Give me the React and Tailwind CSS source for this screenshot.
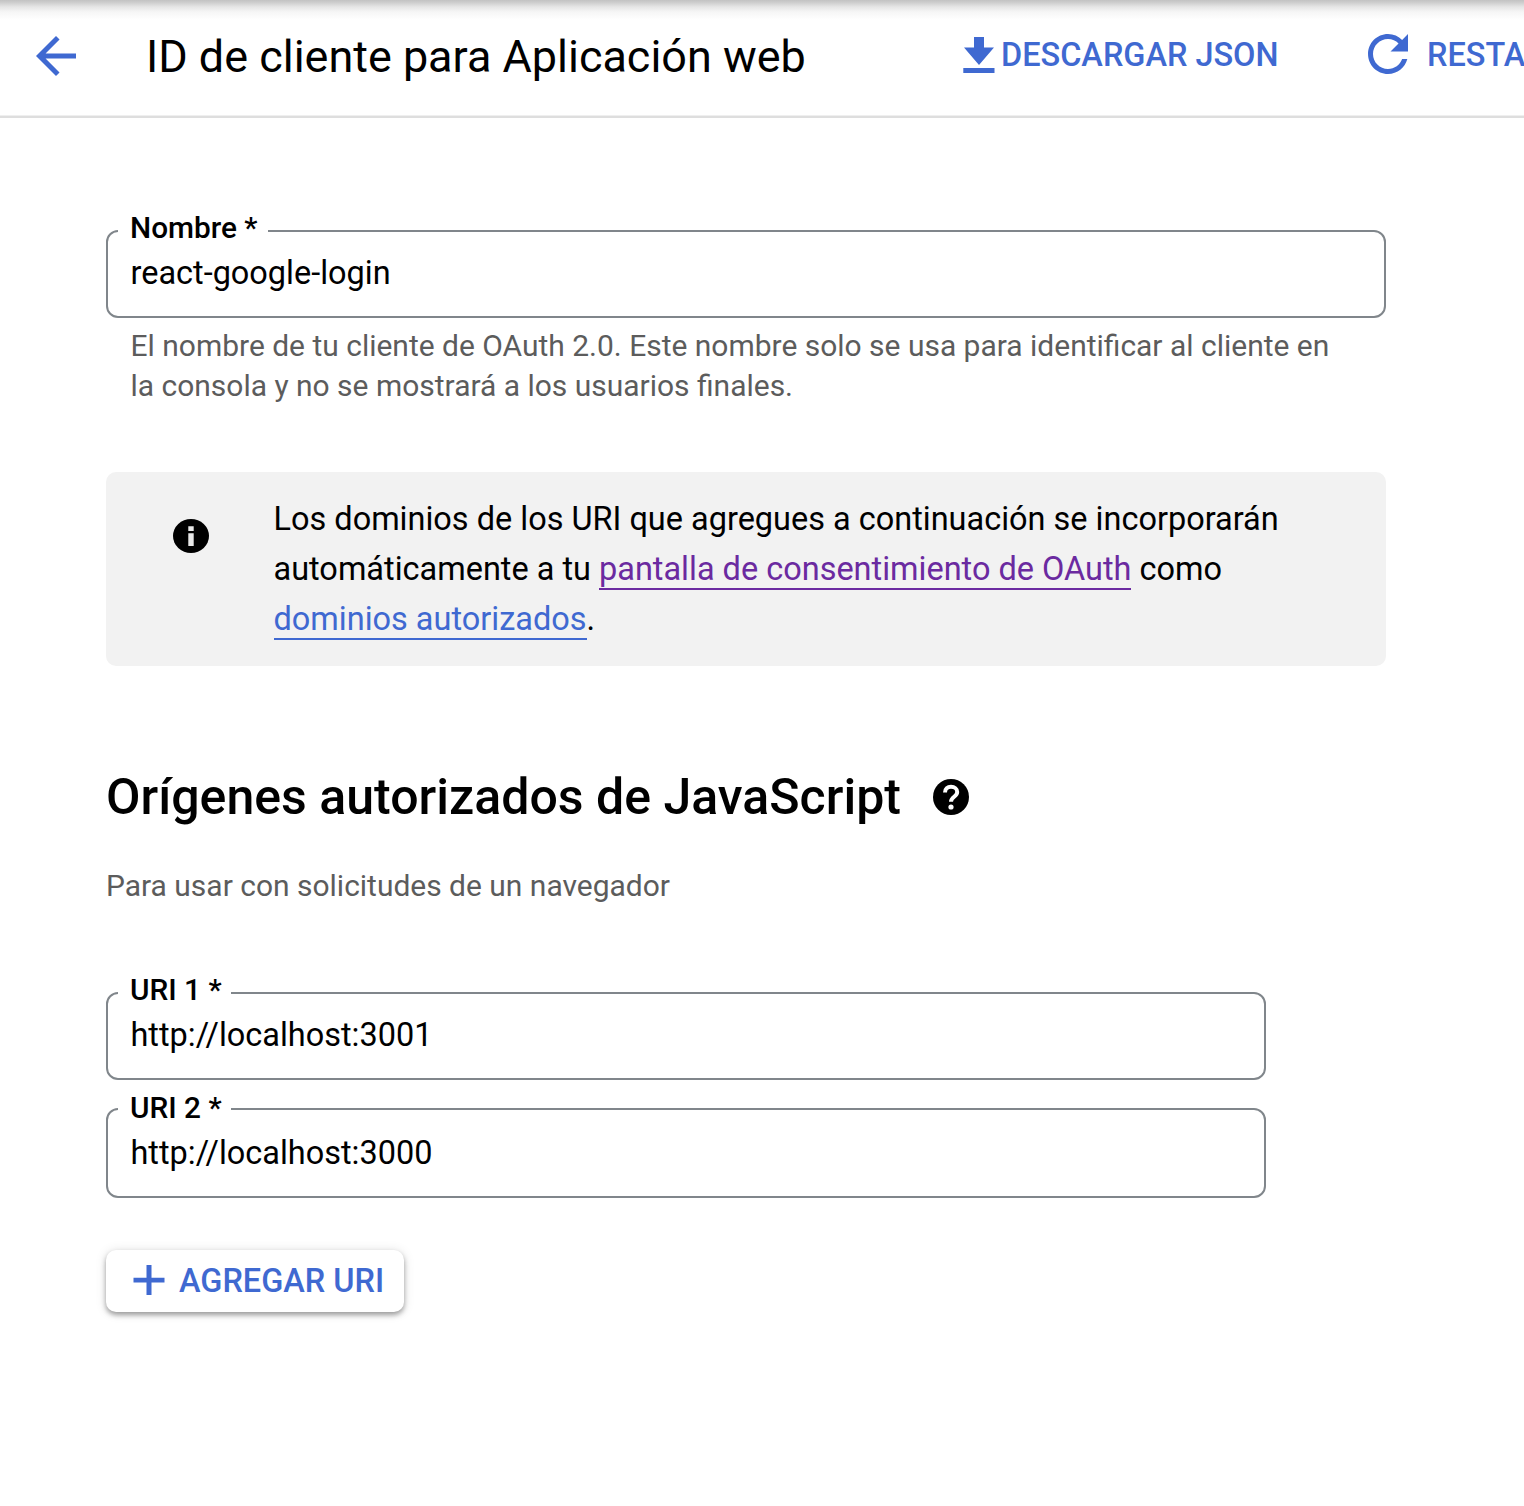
function Field({ label, value, box, labelPlace, valuePlace }) {
  return (
    <div className={`relative rounded-[12px] border-2 border-[#80868b] ${box}`}>
      <span className={`absolute left-[10px] h-10 bg-white pl-[12px] text-[29.8px] font-medium leading-10 whitespace-nowrap ${labelPlace}`}>{label}</span>
      <div className={`pl-[22.5px] text-[32.46px] leading-[48px] ${valuePlace}`}>{value}</div>
    </div>
  );
}

export default function App() {
  return (
    <div className="relative h-[1506px] w-[1524px] overflow-hidden bg-white text-black" style={{ fontFamily: 'Roboto, sans-serif' }}>
      <div className="absolute inset-x-0 top-0 h-5 bg-[linear-gradient(to_bottom,#c2c2c2_0px,#d0d0d0_3px,#e6e6e6_7px,#f6f6f6_12px,#ffffff_20px)]" />
      <header className="relative flex h-[118px] items-start overflow-hidden border-b-2 border-[#dedede] whitespace-nowrap text-[#3f69d1] shadow-[inset_0_-1px_0_#efefef]">
        <svg className="mt-[26px] ml-[26px] size-[60px] shrink-0" viewBox="0 0 24 24" fill="currentColor">
          <path d="M20 11H7.83l5.59-5.59L12 4l-8 8 8 8 1.41-1.41L7.83 13H20v-2z" />
        </svg>
        <h1 className="mt-[27px] ml-[60px] w-[817px] shrink-0 text-[44.95px] leading-[60px] text-black">ID de cliente para Aplicación web</h1>
        <svg className="mt-[37px] h-9 w-8 shrink-0" viewBox="0 0 32 36" fill="currentColor">
          <path d="M11 0h10v10.5h10L16 28 1 10.5h10zM.3 31h31.2v5H.3z" />
        </svg>
        <span className="mt-[31px] ml-[6px] w-[357px] shrink-0 text-[32.46px] font-medium leading-[48px]">DESCARGAR JSON</span>
        <svg className="mt-6 size-[60px] shrink-0" viewBox="0 0 24 24" fill="currentColor">
          <path d="M17.65 6.35C16.2 4.9 14.21 4 12 4c-4.42 0-7.99 3.58-7.99 8s3.57 8 7.99 8c3.73 0 6.84-2.55 7.73-6h-2.08c-.82 2.33-3.04 4-5.65 4-3.31 0-6-2.69-6-6s2.69-6 6-6c1.66 0 3.14.69 4.22 1.78L13 11h7V4l-2.35 2.35z" />
        </svg>
        <span className="mt-[31px] ml-[9px] shrink-0 text-[32.46px] font-medium leading-[48px]">RESTA</span>
      </header>
      <main className="px-[106px] pt-[112px]">
        <Field label="Nombre *" value="react-google-login" box="h-[88px] w-[1280px]" labelPlace="-top-[24px] pr-[10px]" valuePlace="pt-[17px]" />
        <p className="pt-2 pl-[24.5px] text-[29.97px] leading-10 text-[#5c5c5c]">
          El nombre de tu cliente de OAuth 2.0. Este nombre solo se usa para identificar al cliente en<br />la consola y no se mostrará a los usuarios finales.
        </p>
        <section className="mt-[66px] flex h-[194px] w-[1280px] items-start rounded-[10px] bg-[#f2f2f2] pl-[67px]">
          <svg className="mt-[47px] h-[34px] w-9 shrink-0" viewBox="0 0 36 34">
            <ellipse cx="18" cy="17" rx="18" ry="17" />
            <path d="M15.3 7.3h5.4v4.7h-5.4zM15.3 14.3h5.4V27h-5.4z" fill="#e8e8e8" />
          </svg>
          <p className="ml-[64.5px] pt-[22px] text-[32.47px] leading-[50px] whitespace-nowrap">
            Los dominios de los URI que agregues a continuación se incorporarán<br />
            automáticamente a tu <a className="border-b-2 border-[#6b2aa0] text-[#6b2aa0]">pantalla de consentimiento de OAuth</a> como<br />
            <a className="border-b-2 border-[#3f69d1] text-[#3f69d1]">dominios autorizados</a>.
          </p>
        </section>
        <div className="mt-[99px] flex items-center">
          <h2 className="w-[827px] text-[50.05px] font-medium leading-[64px]">Orígenes autorizados de JavaScript</h2>
          <svg className="size-9 shrink-0" viewBox="0 0 36 36">
            <circle cx="18" cy="18" r="18" />
            <path d="M12 13.5C12 9.8 14.5 7.8 18 7.8s6.200 2 6.200 5.200c0 4.700-6.200 4.900-6.200 9.800" fill="none" stroke="#fff" strokeWidth="4" />
            <circle cx="18" cy="28" r="2.6" fill="#fff" />
          </svg>
        </div>
        <p className="mt-[37px] text-[29.97px] leading-10 text-[#5c5c5c]">Para usar con solicitudes de un navegador</p>
        <div className="mt-[86px] flex flex-col gap-7">
          <Field label="URI 1 *" value="http://localhost:3001" box="h-[88px] w-[1160px]" labelPlace="-top-[24px] pr-[9px]" valuePlace="pt-[17px]" />
          <Field label="URI 2 *" value="http://localhost:3000" box="h-[90px] w-[1160px]" labelPlace="-top-[22px] pr-[9px]" valuePlace="pt-[19px]" />
        </div>
        <button className="mt-[52px] flex h-[62px] w-[298px] items-center rounded-[10px] bg-white pl-[27px] text-[32.46px] font-medium whitespace-nowrap text-[#3f69d1] shadow-[0_3px_5px_rgba(0,0,0,0.34),0_1px_12px_rgba(0,0,0,0.12)]">
          <svg className="-mt-[2px] mr-[14px] h-[30px] w-8 shrink-0" viewBox="0 0 32 30" fill="currentColor">
            <path d="M13.5 0h5v12.7h13v4.8h-13V30h-5V17.5H.5v-4.8h13z" />
          </svg>
          AGREGAR URI
        </button>
      </main>
    </div>
  );
}
